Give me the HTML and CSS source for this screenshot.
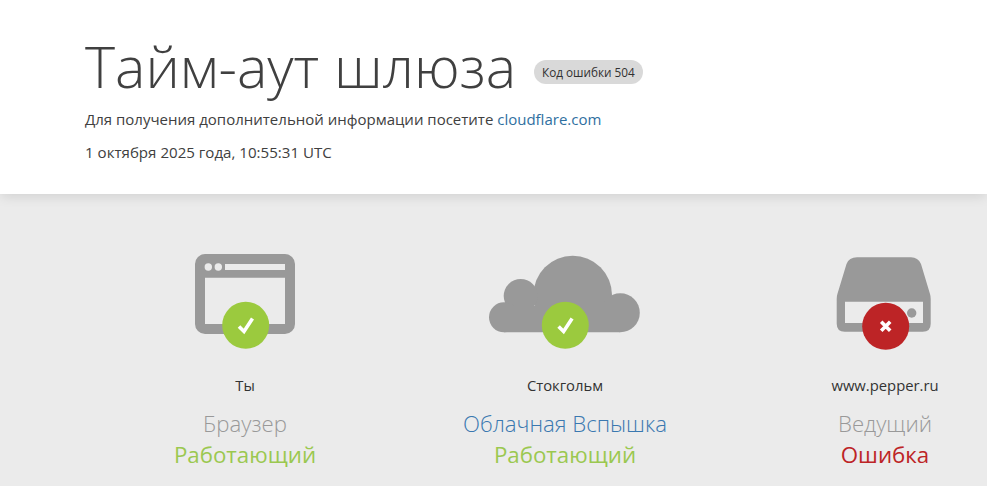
FILE: index.html
```html
<!DOCTYPE html>
<html lang="ru">
<head>
<meta charset="utf-8">
<title>Тайм-аут шлюза</title>
<link rel="stylesheet" href="styles.css">
</head>
<body>
<header class="head">
  <h1 class="title"><span>Тайм-аут шлюза</span><span class="badge">Код ошибки 504</span></h1>
  <p class="info">Для получения дополнительной информации посетите <a href="#">cloudflare.com</a></p>
  <p class="date">1 октября 2025 года, 10:55:31 UTC</p>
</header>
<main class="status">
  <section class="col">
    <div class="icon">
      <svg width="200" height="110" viewBox="60 0 200 110">
        <path fill="#999" fill-rule="evenodd" d="M120 10h80a10 10 0 0 1 10 10v60a10 10 0 0 1-10 10h-80a10 10 0 0 1-10-10v-60a10 10 0 0 1 10-10zM120 33.700v46.300h80v-46.300z"/>
        <path fill="#ebebeb" d="M140 20h60v6h-60z"/>
        <circle cx="123.300" cy="23" r="3.700" fill="#ebebeb"/>
        <circle cx="133.300" cy="23" r="3.700" fill="#ebebeb"/>
        <circle cx="160.700" cy="81.300" r="23.500" fill="#9bca3e"/>
        <path fill="none" stroke="#fff" stroke-width="3.600" d="M154 82.500l5 5l8.500-13"/>
      </svg>
    </div>
    <div class="place">Ты</div>
    <div class="name">Браузер</div>
    <div class="state ok">Работающий</div>
  </section>
  <section class="col">
    <div class="icon">
      <svg width="200" height="110" viewBox="60 0 200 110">
        <g fill="#999">
          <circle cx="167.700" cy="51" r="39.300"/>
          <circle cx="115.700" cy="52" r="17"/>
          <circle cx="99" cy="73.300" r="15"/>
          <circle cx="215.300" cy="68.800" r="19.500"/>
          <path d="M99 62h116v26.300h-116z"/>
        </g>
        <circle cx="160.300" cy="81.300" r="23.500" fill="#9bca3e"/>
        <path fill="none" stroke="#fff" stroke-width="3.600" d="M153.600 82.500l5 5l8.500-13"/>
      </svg>
    </div>
    <div class="place">Стокгольм</div>
    <a class="name link" href="#">Облачная Вспышка</a>
    <div class="state ok">Работающий</div>
  </section>
  <section class="col">
    <div class="icon">
      <svg width="200" height="110" viewBox="60 0 200 110">
        <path fill="#999" fill-rule="evenodd" d="M132 13.300H186Q193 13.300 196 20L205 50Q205.700 52 205.700 55V79.700Q205.700 87.700 197.700 87.700H119.700Q111.700 87.700 111.700 79.700V55Q111.700 52 112.400 50L121.500 20Q124 13.300 132 13.300ZM120 57.700V79H198V57.700Z"/>
        <circle cx="186.700" cy="69" r="4.700" fill="#999"/>
        <circle cx="160.700" cy="82.300" r="23.500" fill="#bd2426"/>
        <path fill="none" stroke="#fff" stroke-width="3.600" d="M156.200 77.800l9 9m0-9l-9 9"/>
      </svg>
    </div>
    <div class="place">www.pepper.ru</div>
    <div class="name">Ведущий</div>
    <div class="state err">Ошибка</div>
  </section>
</main>
</body>
</html>
```

FILE: styles.css
```css
* { box-sizing: border-box; }
html, body { margin: 0; height: 100%; overflow: hidden; }
body { font-family: "Open Sans", "Liberation Sans", sans-serif; color: #404040; background: #ebebeb; }
a { color: #3a78b0; text-decoration: none; }
.head { background: #fff; height: 194px; padding: 30px 0 0 85px; box-shadow: 0 3px 12px -1px rgba(0,0,0,.12); position: relative; }
.title { margin: 0; height: 72px; display: flex; align-items: center; gap: 18px; font-size: 57.300px; font-weight: 300; line-height: 72px; color: #404040; white-space: nowrap; }
.badge { font-size: 11.750px; font-weight: 500; line-height: 16px; background: #d9d9d9; color: #313131; border-radius: 12px; padding: 4px 8px; margin-top: 12px; }
.info, .date { margin: 0; font-size: 15px; line-height: 20px; color: #404040; }
.info { margin-top: 7px; }
.info a { color: #2f6f9f; }
.date { margin-top: 13px; font-size: 15.100px; }
.status { display: flex; gap: 120px; padding: 50px 0 0 145px; }
.col { flex: 0 0 200px; min-width: 0; display: flex; flex-direction: column; align-items: center; text-align: center; white-space: nowrap; }
.icon { height: 110px; width: 200px; flex: none; }
.icon svg { display: block; }
.place { margin-top: 21px; font-size: 14.800px; line-height: 20px; color: #333; }
.name { margin-top: 14px; font-size: 22.200px; font-weight: 300; line-height: 30px; color: #999; }
.link { color: #3a78b0; }
.state { margin-top: 1px; font-size: 22.300px; font-weight: 400; line-height: 30px; }
.ok { color: #9bc850; }
.err { color: #bd2426; }
```
